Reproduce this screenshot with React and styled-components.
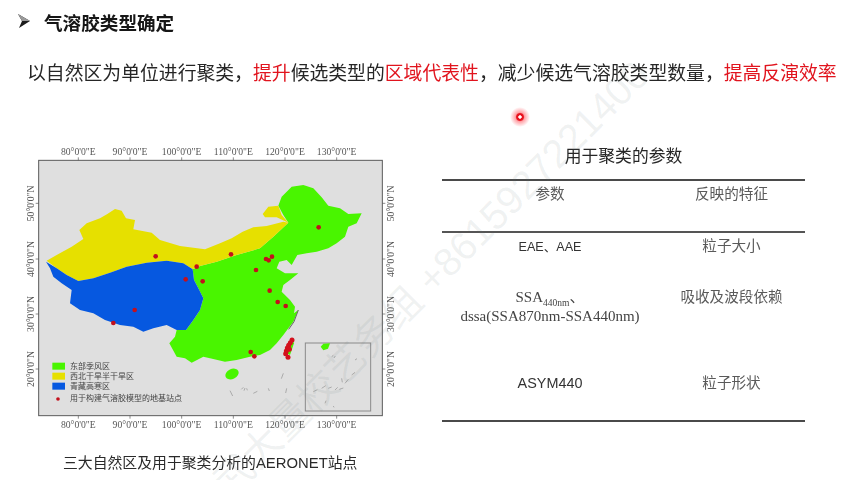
import React from "react";
import styled, { createGlobalStyle } from "styled-components";

const CJK = `"Noto Sans CJK SC", "Noto Sans", sans-serif`;

const GlobalStyle = createGlobalStyle`
  html, body {
    margin: 0;
    padding: 0;
    background: #fff;
  }
`;

const Page = styled.div`
  position: relative;
  width: 857px;
  height: 480px;
  overflow: hidden;
  background: #fff;
  font-family: ${CJK};
`;

const Slide = styled.div`
  display: flex;
  flex-direction: column;
  height: 100%;
  filter: blur(0.6px);
`;

const Heading = styled.h1`
  display: flex;
  align-items: center;
  gap: 14px;
  height: 42px;
  margin: 0;
  padding-left: 18px;
  font-size: 18.6px;
  font-weight: 700;
  color: #161616;
`;

const Lead = styled.p`
  margin: 16px 0 0;
  padding-left: 27px;
  font-size: 18.84px;
  line-height: 28px;
  white-space: nowrap;
  color: #262626;
`;

const Mark = styled.span`
  color: #e1141e;
`;

const Body = styled.div`
  display: grid;
  grid-template-columns: 442px 363px;
  margin-top: 54px;
`;

const MapColumn = styled.div`
  padding-left: 20px;
`;

const MapFigure = styled.svg`
  display: block;
  width: 400px;
  height: 300px;
`;

const Caption = styled.div`
  margin-top: 11px;
  padding-left: 43px;
  font-size: 14.85px;
  line-height: 24px;
  white-space: nowrap;
  color: #2a2a2a;
  font-family: "Liberation Sans", ${CJK};
`;

const TableColumn = styled.div`
  padding-top: 4px;
`;

const TableTitle = styled.div`
  height: 22px;
  margin-bottom: 13px;
  font-size: 16.8px;
  line-height: 22px;
  text-align: center;
  color: #262626;
`;

const ParamTable = styled.table`
  width: 363px;
  table-layout: fixed;
  border-collapse: collapse;
  border-top: 2px solid #4a4a4a;
  border-bottom: 2px solid #4a4a4a;
`;

const Row = styled.tr`
  height: ${(p) => p.$height}px;
  border-bottom: ${(p) => (p.$rule ? "2px solid #555" : "none")};
`;

const Cell = styled.td`
  padding: ${(p) => p.$top}px 0 0;
  vertical-align: top;
  text-align: center;
  font-size: 14.6px;
  line-height: 18px;
  color: #5a5a5a;
`;

const SansValue = styled.span`
  font-family: "Liberation Sans", ${CJK};
  font-size: ${(p) => p.$size}px;
  color: #333;
`;

const SerifValue = styled.span`
  font-family: "Liberation Serif", ${CJK};
  font-size: 15px;
  color: #444;
  white-space: nowrap;
  sub {
    font-size: 9.5px;
    line-height: 0;
  }
`;

const Watermark = styled.div`
  position: absolute;
  left: 220px;
  top: 469px;
  transform: rotate(-45deg);
  transform-origin: left center;
  font-family: "Liberation Sans", ${CJK};
  font-size: 39.5px;
  line-height: 40px;
  white-space: nowrap;
  color: rgba(105, 125, 125, 0.1);
  pointer-events: none;
`;

const Pointer = styled.div`
  position: absolute;
  left: 510px;
  top: 107px;
  width: 20px;
  height: 20px;
  border-radius: 50%;
  background: radial-gradient(circle, #fff 0 1.4px, #e8101c 2px 3.4px, rgba(255, 70, 80, 0.5) 4.6px, rgba(255, 120, 130, 0) 10px);
`;

const LONS = [
  [175, "80°0'0\"E"],
  [330, "90°0'0\"E"],
  [485, "100°0'0\"E"],
  [640, "110°0'0\"E"],
  [795, "120°0'0\"E"],
  [950, "130°0'0\"E"],
];

const LATS = [
  [190, "50°0'0\"N"],
  [357, "40°0'0\"N"],
  [522, "30°0'0\"N"],
  [687, "20°0'0\"N"],
];

const STATIONS = [
  [896, 262], [407, 349], [633, 343], [530, 380], [756, 350], [738, 357],
  [746, 361], [708, 390], [497, 418], [548, 424], [749, 452], [773, 486],
  [797, 498], [344, 510], [280, 549], [692, 636], [703, 649],
];

const TAIWAN = [
  [816, 600], [811, 608], [806, 616], [802, 624], [799, 633], [797, 641], [804, 652], [808, 628],
];

const LEGEND = [
  [668, "#49f500", "东部季风区"],
  [698, "#e6e000", "西北干旱半干旱区"],
  [728, "#0658e0", "青藏高寒区"],
];

const SPECKS = [
  "M664 748l6-6M672 752l3-8M680 745l2 6M630 752l8 16M700 760l12-6M745 745l3 8M790 700l-6 16M800 745l-3 14",
  "M935 650l5-4M942 654l4-6M880 755l12-6M905 745l12-8M925 745l10-4M945 750l8-8M965 715l2 12M975 730l10-12M995 705l10-8M915 790l3-8M940 798l2 4M958 748l12-4M1005 660l6-4",
];

const ChinaMap = () => (
  <MapFigure viewBox="0 0 1200 900">
    <rect x="56" y="61" width="1031" height="766" fill="#dfdfdf" stroke="#5a5a5a" strokeWidth="3" />
    {LONS.map(([x, label]) => (
      <g key={x}>
        <path d={`M${x} 52V61M${x} 827V836`} stroke="#555" strokeWidth="2" />
        <text x={x} y="45" textAnchor="middle" fontFamily="Liberation Serif" fontSize="29" fill="#555">{label}</text>
        <text x={x} y="865" textAnchor="middle" fontFamily="Liberation Serif" fontSize="29" fill="#555">{label}</text>
      </g>
    ))}
    {LATS.map(([y, label]) => (
      <g key={y}>
        <path d={`M47 ${y}H56M1087 ${y}H1096`} stroke="#555" strokeWidth="2" />
        <text transform={`translate(41 ${y}) rotate(-90)`} textAnchor="middle" fontFamily="Liberation Serif" fontSize="29" fill="#555">{label}</text>
        <text transform={`translate(1122 ${y}) rotate(-90)`} textAnchor="middle" fontFamily="Liberation Serif" fontSize="29" fill="#555">{label}</text>
      </g>
    ))}
    <path
      fill="#49f500"
      d="M805 248L790 225L775 197L785 170L800 155L815 140L850 135L880 145L905 172L925 197L960 205L985 222L1025 220L1010 250L985 260L975 290L950 310L925 325L890 335L860 340L832 345L815 375L800 360L778 365L770 385L795 400L835 400L810 420L790 435L785 455L810 480L825 500L822 520L835 510L820 545L805 565L790 585L770 610L750 630L720 645L690 650L650 660L615 665L570 655L550 650L515 668L495 655L470 650L448 610L465 590L470 570L498 570L520 540L540 510L550 475L535 445L522 420L518 388L540 378L590 365L650 345L720 325L760 290Z"
    />
    <path
      fill="#e6e000"
      d="M80 362L110 345L155 320L190 297L178 270L200 250L240 235L262 222L285 207L305 212L318 235L345 240L340 268L395 278L420 300L480 318L555 328L600 310L635 295L668 275L700 262L740 258L790 245L805 248L760 290L720 325L650 345L590 365L540 378L518 388L490 370L440 362L380 368L320 380L270 398L220 415L175 423L140 405L110 385ZM728 222L745 200L775 197L785 225L805 248L770 232L735 232Z"
    />
    <path
      fill="#0658e0"
      d="M78 365L110 385L140 405L175 423L220 415L270 398L320 380L380 368L440 362L490 370L518 388L522 420L535 445L550 475L540 510L520 540L498 570L470 570L440 555L400 565L370 575L340 560L300 555L255 540L220 520L180 510L150 490L155 450L125 430L100 410L90 385Z"
    />
    <ellipse cx="636" cy="702" rx="21" ry="15" transform="rotate(-25 636 702)" fill="#49f500" />
    <path fill="#49f500" d="M800 618L818 600L822 610L810 645L800 640Z" />
    <path d="M835 510L822 545L806 568" fill="none" stroke="#666" strokeWidth="3" />
    <rect x="856" y="609" width="196" height="204" fill="none" stroke="#8a8a8a" strokeWidth="3" />
    <path fill="#49f500" d="M902 620L910 611L930 610L924 626L910 631Z" />
    {SPECKS.map((d) => (
      <path key={d} d={d} fill="none" stroke="#8f8f8f" strokeWidth="2" />
    ))}
    {STATIONS.map(([x, y]) => (
      <circle key={`${x}-${y}`} cx={x} cy={y} r="7" fill="#c3101c" />
    ))}
    {TAIWAN.map(([x, y]) => (
      <circle key={`${x}-${y}`} cx={x} cy={y} r="7.5" fill="#d3101c" />
    ))}
    {LEGEND.map(([y, fill, label]) => (
      <g key={y}>
        <rect x="97" y={y} width="38" height="21" fill={fill} />
        <text x="150" y={y + 20} fontFamily="Noto Sans CJK SC" fontSize="24" fill="#444">{label}</text>
      </g>
    ))}
    <circle cx="114" cy="777" r="5.5" fill="#c3101c" />
    <text x="150" y="784" fontFamily="Noto Sans CJK SC" fontSize="24" fill="#444">用于构建气溶胶模型的地基站点</text>
  </MapFigure>
);

const BulletArrow = () => (
  <svg width="12" height="14" viewBox="0 0 12 14">
    <path d="M0 0L12 7L1 14L4 7Z" fill="#1c1c1c" />
    <path d="M0 0L12 7L4 7Z" fill="#9a9a9a" />
  </svg>
);

export default function App() {
  return (
    <>
      <GlobalStyle />
      <Page>
        <Slide>
          <Heading>
            <BulletArrow />
            气溶胶类型确定
          </Heading>
          <Lead>
            以自然区为单位进行聚类，<Mark>提升</Mark>候选类型的<Mark>区域代表性</Mark>，减少候选气溶胶类型数量，<Mark>提高反演效率</Mark>
          </Lead>
          <Body>
            <MapColumn>
              <ChinaMap />
              <Caption>三大自然区及用于聚类分析的AERONET站点</Caption>
            </MapColumn>
            <TableColumn>
              <TableTitle>用于聚类的参数</TableTitle>
              <ParamTable>
                <colgroup>
                  <col width="216" />
                  <col width="147" />
                </colgroup>
                <tbody>
                  <Row $height={52} $rule>
                    <Cell $top={3}>参数</Cell>
                    <Cell $top={3}>反映的特征</Cell>
                  </Row>
                  <Row $height={45}>
                    <Cell $top={3}><SansValue $size={12.6}>EAE、AAE</SansValue></Cell>
                    <Cell $top={3}>粒子大小</Cell>
                  </Row>
                  <Row $height={87}>
                    <Cell $top={10}>
                      <SerifValue>SSA<sub>440nm</sub>、</SerifValue>
                      <br />
                      <SerifValue>dssa(SSA870nm-SSA440nm)</SerifValue>
                    </Cell>
                    <Cell $top={10}>吸收及波段依赖</Cell>
                  </Row>
                  <Row $height={57}>
                    <Cell $top={9}><SansValue $size={14.4}>ASYM440</SansValue></Cell>
                    <Cell $top={9}>粒子形状</Cell>
                  </Row>
                </tbody>
              </ParamTable>
            </TableColumn>
          </Body>
        </Slide>
        <Watermark>武大量校艺务组 +8615927221400</Watermark>
        <Pointer />
      </Page>
    </>
  );
}
